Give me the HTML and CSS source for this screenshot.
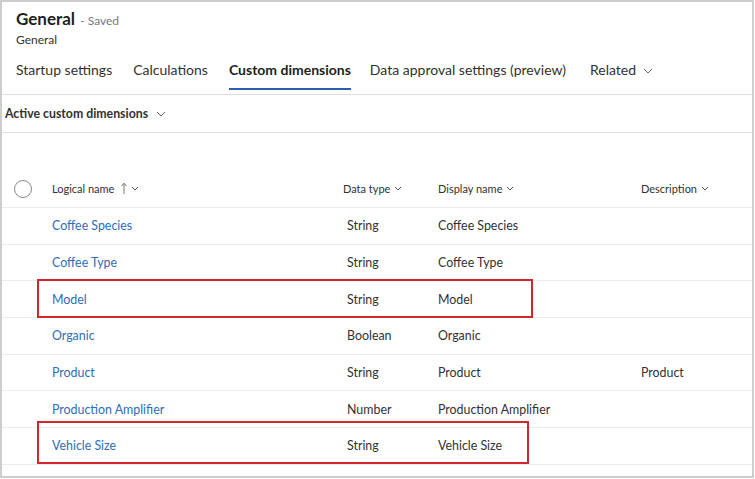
FILE: index.html
```html
<!DOCTYPE html>
<html lang="en">
<head>
<meta charset="utf-8">
<title>General - Saved</title>
<link rel="stylesheet" href="styles.css">
</head>
<body>
<div class="frame">
  <header class="head">
    <h1 class="title">General <span class="saved">- Saved</span></h1>
    <div class="sub">General</div>
  </header>

  <nav class="tabs">
    <span class="tab">Startup settings</span>
    <span class="tab">Calculations</span>
    <span class="tab active">Custom dimensions</span>
    <span class="tab">Data approval settings (preview)</span>
    <span class="tab">Related <svg class="chev" width="10" height="6" viewBox="0 0 10 6"><polyline points="1,1 5,5 9,1" fill="none" stroke="#666" stroke-width="1"/></svg></span>
  </nav>

  <div class="viewbar">
    <span class="viewname">Active custom dimensions</span>
    <svg class="chev" width="10" height="6" viewBox="0 0 10 6"><polyline points="1,1 5,5 9,1" fill="none" stroke="#666" stroke-width="1"/></svg>
  </div>

  <div class="grid">
    <div class="row hdr">
      <div class="c-check"><span class="radio"></span></div>
      <div class="c-name">Logical name
        <svg class="sort" width="6" height="12" viewBox="0 0 6 12"><line x1="3" y1="1.5" x2="3" y2="12" stroke="#777" stroke-width="1"/><polyline points="0.5,4 3,1.2 5.5,4" fill="none" stroke="#777" stroke-width="1"/></svg>
        <svg class="hchev" width="8" height="5" viewBox="0 0 8 5"><polyline points="1,1 4,4 7,1" fill="none" stroke="#555" stroke-width="1"/></svg>
      </div>
      <div class="c-type">Data type <svg class="hchev" width="8" height="5" viewBox="0 0 8 5"><polyline points="1,1 4,4 7,1" fill="none" stroke="#555" stroke-width="1"/></svg></div>
      <div class="c-disp">Display name <svg class="hchev" width="8" height="5" viewBox="0 0 8 5"><polyline points="1,1 4,4 7,1" fill="none" stroke="#555" stroke-width="1"/></svg></div>
      <div class="c-desc">Description <svg class="hchev" width="8" height="5" viewBox="0 0 8 5"><polyline points="1,1 4,4 7,1" fill="none" stroke="#555" stroke-width="1"/></svg></div>
    </div>

    <div class="row"><div class="c-check"></div><div class="c-name"><a class="link">Coffee Species</a></div><div class="c-type v">String</div><div class="c-disp">Coffee Species</div><div class="c-desc"></div></div>
    <div class="row"><div class="c-check"></div><div class="c-name"><a class="link">Coffee Type</a></div><div class="c-type v">String</div><div class="c-disp">Coffee Type</div><div class="c-desc"></div></div>
    <div class="row"><div class="c-check"></div><div class="c-name"><a class="link">Model</a></div><div class="c-type v">String</div><div class="c-disp">Model</div><div class="c-desc"></div><span class="mark mark-model"></span></div>
    <div class="row"><div class="c-check"></div><div class="c-name"><a class="link">Organic</a></div><div class="c-type v">Boolean</div><div class="c-disp">Organic</div><div class="c-desc"></div></div>
    <div class="row"><div class="c-check"></div><div class="c-name"><a class="link">Product</a></div><div class="c-type v">String</div><div class="c-disp">Product</div><div class="c-desc">Product</div></div>
    <div class="row"><div class="c-check"></div><div class="c-name"><a class="link">Production Amplifier</a></div><div class="c-type v">Number</div><div class="c-disp">Production Amplifier</div><div class="c-desc"></div></div>
    <div class="row"><div class="c-check"></div><div class="c-name"><a class="link">Vehicle Size</a></div><div class="c-type v">String</div><div class="c-disp">Vehicle Size</div><div class="c-desc"></div><span class="mark mark-vehicle"></span></div>
  </div>
</div>
</body>
</html>
```

FILE: styles.css
```css
* { box-sizing: border-box; }
html, body { margin: 0; padding: 0; background: #fff; }
body {
  font-family: Lato, "Noto Sans", "Liberation Sans", sans-serif;
  color: #323130;
}
.frame {
  width: 754px;
  height: 478px;
  border: 2px solid #cdcdcd;
  background: #fff;
  overflow: hidden;
}
.head { padding: 6px 0 0 14px; height: 49px; }
.title {
  margin: 0;
  font-size: 17px;
  font-weight: 700;
  line-height: 22px;
  color: #201f1e;
}
.saved { font-size: 12px; font-weight: 400; color: #7a7a7a; margin-left: 1px; }
.sub { font-size: 12px; line-height: 14px; margin-top: 1px; color: #323130; }

.tabs {
  display: flex;
  gap: 0;
  height: 44px;
  padding-left: 14px;
  border-bottom: 1px solid #dedede;
  align-items: stretch;
}
.tab {
  font-size: 14px;
  color: #323130;
  padding-top: 10px;
  margin-right: 21px;
  display: flex;
  align-items: flex-start;
  gap: 7px;
  border-bottom: 2px solid transparent;
  height: 39px;
}
.tab:nth-child(3) { margin-right: 19px; }
.tab:nth-child(4) { margin-right: 24px; }
.tab .chev { margin-top: 7px; }
.tab.active { font-weight: 700; border-bottom-color: #2b5fb4; color: #201f1e; }

.viewbar {
  height: 38px;
  display: flex;
  align-items: center;
  padding-left: 3px;
  gap: 8px;
  border-bottom: 1px solid #e1e1e1;
}
.viewname { font-size: 12.3px; font-weight: 700; color: #323130; }

.grid { padding-top: 37px; }
.row {
  position: relative;
  display: grid;
  grid-template-columns: 50px 291px 95px 203px 1fr;
  height: 36.7px;
  align-items: center;
  border-bottom: 1px solid #ececec;
  font-size: 12.4px;
}
.row.hdr { height: 38px; font-size: 11px; color: #323130; }
.c-check { display: flex; padding-left: 12px; }
.radio {
  width: 18px; height: 18px;
  border: 1px solid #8a8886;
  border-radius: 50%;
  display: block;
}
.c-name, .c-type, .c-disp, .c-desc { display: flex; align-items: center; white-space: nowrap; }
.hdr .c-name, .hdr .c-type, .hdr .c-disp, .hdr .c-desc { gap: 4px; }
.hdr .c-name .sort { margin-left: 3px; margin-top: -2px; }
.c-type.v { padding-left: 4px; }
.link { color: #2e6db8; text-decoration: none; }

.mark {
  position: absolute;
  border: 2px solid #d1262b;
  pointer-events: none;
}
.mark-model { left: 35px; top: -2px; width: 496px; height: 39px; }
.mark-vehicle { left: 35px; top: -7px; width: 492px; height: 43px; }
```
